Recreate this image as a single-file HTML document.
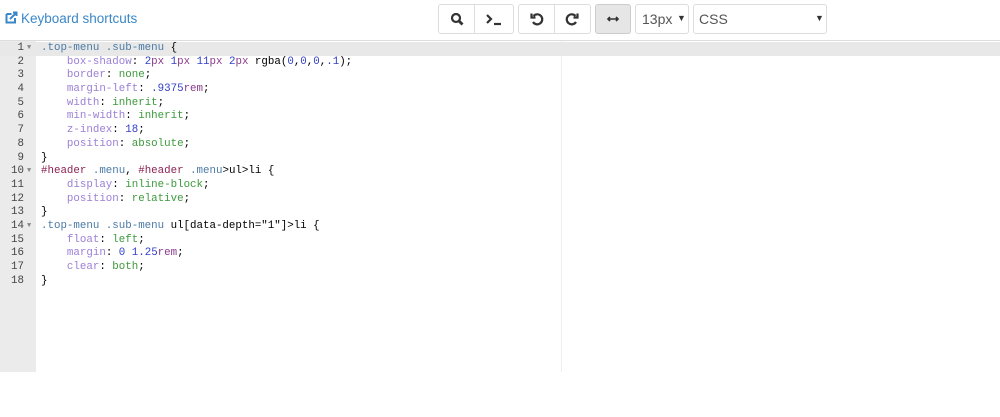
<!DOCTYPE html><html><head><style>
body{margin:0;width:1000px;height:417px;background:#fff;font-family:"Liberation Sans",sans-serif;position:relative;overflow:hidden}
.ks{position:absolute;left:5px;top:11px;color:#3a87c8;font-size:13.5px}
.b{position:absolute;top:4px;height:30px;border:1px solid #ddd;border-radius:3px;box-sizing:border-box;background:#fff}
.sp{position:absolute;top:0;bottom:0;width:1px;background:#ddd}
.ic{position:absolute;top:7px}
.ed{position:absolute;left:0;top:40px;width:1000px;height:331px;border-top:1px solid #ddd;box-sizing:border-box}
.g{position:absolute;left:0;top:0;width:36px;height:331px;background:#ebebeb}
.v{position:absolute;left:561px;top:0;width:1px;height:331px;background:#eee}
.code{position:absolute;left:0;top:1px;width:1000px;font-family:"Liberation Mono",monospace;font-size:10.8px;line-height:13.7px}
.l{height:13.7px;position:relative;white-space:pre}
.n{position:absolute;left:0;width:24px;text-align:right;color:#444}
.f{position:absolute;left:27px;color:#888;font-size:7px}
.t{position:absolute;left:41px;color:#000}
.act{background:#e8e8e8}
.s{color:#4a7aa5}.p{color:#9b7fd6}.k{color:#3c9a3c}.m{color:#3240c7}.u{color:#8a3a8a}.h{color:#8b2252}
</style></head><body>
<div class="ks"><svg width="13" height="13" viewBox="0 0 13 13" style="vertical-align:-1px;margin-right:3px"><path d="M1.5 3h5M1.5 3v8.5h8.5V7" fill="none" stroke="#3a87c8" stroke-width="2"/><path d="M5 8l6-6M8 1.5h3.5V5" fill="none" stroke="#3a87c8" stroke-width="2"/></svg>Keyboard shortcuts</div>
<div class="b" style="left:438px;width:76px"><div class="sp" style="left:35px"></div>
<svg class="ic" style="left:11px" width="14" height="14" viewBox="0 0 14 14"><circle cx="6" cy="6" r="4" fill="none" stroke="#333" stroke-width="2.2"/><path d="M9 9l3.5 3.5" stroke="#333" stroke-width="2.8"/></svg>
<svg class="ic" style="left:46px" width="18" height="14" viewBox="0 0 18 14"><path d="M2 3l4 4-4 4" fill="none" stroke="#333" stroke-width="2.2"/><path d="M9 12h7" stroke="#333" stroke-width="2.2"/></svg></div>
<div class="b" style="left:518px;width:73px"><div class="sp" style="left:35px"></div>
<svg class="ic" style="left:11px" width="14" height="14" viewBox="0 0 14 14"><path d="M3.5 4A5 5 0 1 1 3 10" fill="none" stroke="#333" stroke-width="2.2"/><path d="M1.5 1.5v4h4" fill="none" stroke="#333" stroke-width="2.2"/></svg>
<svg class="ic" style="left:46px" width="14" height="14" viewBox="0 0 14 14"><path d="M10.5 4A5 5 0 1 0 11 10" fill="none" stroke="#333" stroke-width="2.2"/><path d="M12.5 1.5v4h-4" fill="none" stroke="#333" stroke-width="2.2"/></svg></div>
<div class="b" style="left:595px;width:36px;background:#e6e6e6;border-color:#ccc"><svg class="ic" style="left:10px" width="14" height="14" viewBox="0 0 14 14"><path d="M2 7h10M4 5l-2 2 2 2M10 5l2 2-2 2" fill="none" stroke="#333" stroke-width="1.6"/></svg></div>
<div class="b" style="left:635px;width:54px;font-size:14px;color:#555"><span style="position:absolute;left:6px;top:6px">13px</span><span style="position:absolute;left:41px;top:8px;font-size:9px;color:#333">▼</span></div>
<div class="b" style="left:693px;width:134px;font-size:14px;color:#555"><span style="position:absolute;left:5px;top:6px">CSS</span><span style="position:absolute;left:121px;top:8px;font-size:9px;color:#333">▼</span></div>
<div class="ed"><div class="g"></div><div class="v"></div>
<div class="code">
<div class="l act"><span class="n">1</span><span class="f">▼</span><span class="t"><span class="s">.top-menu .sub-menu</span> {</span></div>
<div class="l"><span class="n">2</span><span class="t">    <span class="p">box-shadow</span>: <span class="m">2</span><span class="u">px</span> <span class="m">1</span><span class="u">px</span> <span class="m">11</span><span class="u">px</span> <span class="m">2</span><span class="u">px</span> rgba(<span class="m">0</span>,<span class="m">0</span>,<span class="m">0</span>,<span class="m">.1</span>);</span></div>
<div class="l"><span class="n">3</span><span class="t">    <span class="p">border</span>: <span class="k">none</span>;</span></div>
<div class="l"><span class="n">4</span><span class="t">    <span class="p">margin-left</span>: <span class="m">.9375</span><span class="u">rem</span>;</span></div>
<div class="l"><span class="n">5</span><span class="t">    <span class="p">width</span>: <span class="k">inherit</span>;</span></div>
<div class="l"><span class="n">6</span><span class="t">    <span class="p">min-width</span>: <span class="k">inherit</span>;</span></div>
<div class="l"><span class="n">7</span><span class="t">    <span class="p">z-index</span>: <span class="m">18</span>;</span></div>
<div class="l"><span class="n">8</span><span class="t">    <span class="p">position</span>: <span class="k">absolute</span>;</span></div>
<div class="l"><span class="n">9</span><span class="t">}</span></div>
<div class="l"><span class="n">10</span><span class="f">▼</span><span class="t"><span class="h">#header</span> <span class="s">.menu</span>, <span class="h">#header</span> <span class="s">.menu</span>&gt;ul&gt;li {</span></div>
<div class="l"><span class="n">11</span><span class="t">    <span class="p">display</span>: <span class="k">inline-block</span>;</span></div>
<div class="l"><span class="n">12</span><span class="t">    <span class="p">position</span>: <span class="k">relative</span>;</span></div>
<div class="l"><span class="n">13</span><span class="t">}</span></div>
<div class="l"><span class="n">14</span><span class="f">▼</span><span class="t"><span class="s">.top-menu .sub-menu</span> ul[data-depth="1"]&gt;li {</span></div>
<div class="l"><span class="n">15</span><span class="t">    <span class="p">float</span>: <span class="k">left</span>;</span></div>
<div class="l"><span class="n">16</span><span class="t">    <span class="p">margin</span>: <span class="m">0</span> <span class="m">1.25</span><span class="u">rem</span>;</span></div>
<div class="l"><span class="n">17</span><span class="t">    <span class="p">clear</span>: <span class="k">both</span>;</span></div>
<div class="l"><span class="n">18</span><span class="t">}</span></div>
</div></div>
</body></html>
